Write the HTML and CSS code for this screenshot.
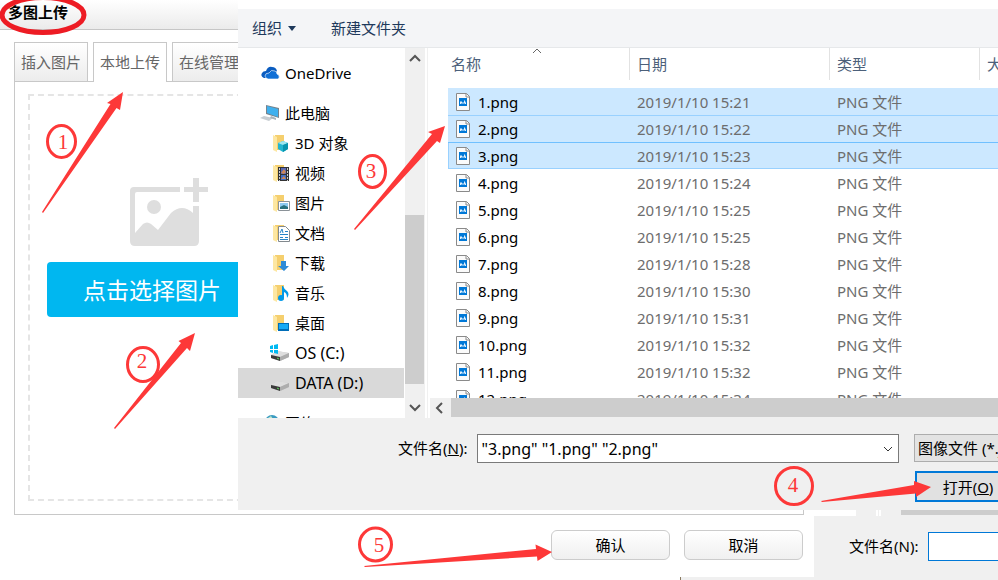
FILE: index.html
```
<!DOCTYPE html>
<html lang="zh-CN">
<head>
<meta charset="utf-8">
<title>多图上传</title>
<link rel="stylesheet" href="styles.css">
</head>
<body>
<svg class="defs" aria-hidden="true">
  <defs>
    <symbol id="folder" viewBox="0 0 18 18">
      <path d="M3 1h9v15H3z" fill="#f5cf6e"/>
      <path d="M1 1l4 2v15l-4-2z" fill="#fde7a2"/>
    </symbol>
    <symbol id="file" viewBox="0 0 16 20">
      <path d="M1.500 1.500h10l3 3v14h-13z" fill="#fbfbfb" stroke="#8a8a8a"/>
      <path d="M11 1.500v3.500h3.500" fill="none" stroke="#8a8a8a"/>
      <path d="M4 6h8v8H4z" fill="#0078d7"/>
      <path d="M5 10l1-1 1 1 1 1 1-1V8l1 1 1 2v1h-1l-1-1-1 1-1-1-1 1H5z" fill="#e4f2fd"/>
    </symbol>
    <symbol id="drive" viewBox="0 0 20 18">
      <path d="M1 9l6-4 12 2v4l-9 4-9-3z" fill="#c9c9c9"/>
      <path d="M1 9l6-4 12 2-9 4z" fill="#dedede"/>
      <path d="M1 9l9 2v4l-9-3z" fill="#3a3a3a"/>
      <path d="M10 11l9-4v4l-9 4z" fill="#adadad"/>
      <path d="M7 12l2 1" stroke="#5fe05f"/>
    </symbol>
  </defs>
</svg>

<main class="upload">
  <header class="upload-title"><h1>多图上传</h1></header>
  <nav class="tabs">
    <button type="button" class="tab">插入图片</button>
    <button type="button" class="tab active">本地上传</button>
    <button type="button" class="tab">在线管理</button>
  </nav>
  <section class="panel">
    <div class="dropzone">
      <div class="chooser">
        <svg class="photo" viewBox="0 0 80 68" width="80" height="68" aria-hidden="true">
          <g fill="#dedede">
            <path d="M5 9H51V14H8Q6 14 6 16V60H1V13Q1 9 5 9z"/>
            <path d="M64 0h6v9h9v5h-9v10h-6v-10h-9V9h9z"/>
            <circle cx="25" cy="29" r="7"/>
            <path d="M64 28h6v35q0 5-5 5H6q-5 0-5-5V56L6 55 14 46Q18 43 22 46L29 52 42 35Q53 25 64 35z"/>
          </g>
        </svg>
        <button type="button" class="choose">点击选择图片</button>
      </div>
    </div>
  </section>
  <footer class="upload-actions">
    <button type="button">确认</button>
    <button type="button">取消</button>
  </footer>
</main>

<section class="picker" aria-label="打开">
  <div class="toolbar">
    <button type="button">组织 <svg width="8" height="5" aria-hidden="true"><path d="M0 0h8L4 5z" fill="#1e395b"/></svg></button>
    <button type="button">新建文件夹</button>
  </div>
  <div class="browser">
    <ul class="tree">
      <li class="root"><svg width="20" height="18" aria-hidden="true"><path d="M4 14Q0 12 2 9q1-2 4-2 2-5 6-4 4 0 5 4l-9 7z" fill="#0a5cc0"/><path d="M8 15q-3-1-3-3 0-3 4-3 2-4 6-2 2 1 2 3 3 1 2 4l-1 1z" fill="#0f6fd6" stroke="#fff" stroke-width="0.600"/></svg>OneDrive</li>
      <li class="root"><svg width="20" height="18" aria-hidden="true"><path d="M6 1l13 3v10L6 10z" fill="#76838d"/><path d="M7 2l11 3v8L7 9z" fill="#3fb0ee"/><path d="M0 14l4-2 9 2-4 3z" fill="#c7cdd2"/><path d="M11 12l5 2v2l-6-2z" fill="#a9b4bb"/></svg>此电脑</li>
      <li><svg width="18" height="18" aria-hidden="true"><use href="#folder"/><path d="M6 9l5-2 5 2v6l-5 3-5-3z" fill="#22b5cf"/><path d="M6 9l5-2 5 2-5 2z" fill="#9fe6ef"/><path d="M11 11l5-2v6l-5 3z" fill="#0794ae"/></svg>3D 对象</li>
      <li><svg width="18" height="18" aria-hidden="true"><use href="#folder"/><path d="M6 3h11v14H6z" fill="#333"/><path d="M9 4h5v6H9z" fill="#5667ba"/><path d="M9 11h5v5H9z" fill="#416fc5"/><path d="M9 9l3-4 2 3-2 2zM9 15l3-3 2 3z" fill="#cf8757"/><path d="M7.500 4v13M15.500 4v13" stroke="#ccc" stroke-dasharray="2 1"/></svg>视频</li>
      <li><svg width="18" height="18" aria-hidden="true"><use href="#folder"/><path d="M6.500 7.500h11v9h-11z" fill="#fff" stroke="#8b9298"/><path d="M8 9h8v6H8z" fill="#8dcaf1"/><path d="M8 13l4-2 4 2v2H8z" fill="#28717e"/></svg>图片</li>
      <li><svg width="18" height="18" aria-hidden="true"><use href="#folder"/><path d="M6.500 2.500h7l4 4v11h-11z" fill="#fff" stroke="#82898e"/><path d="M8 9l2-4 1 4M13 7.500h3M8 10.500h8M8 13.500h3M13 13.500h3M8 15.500h8" fill="none" stroke="#2686c7"/></svg>文档</li>
      <li><svg width="18" height="18" aria-hidden="true"><use href="#folder"/><path d="M9 7h5v5h3l-5 5-6-5h3z" fill="#2e8bd7"/></svg>下载</li>
      <li><svg width="18" height="18" aria-hidden="true"><use href="#folder"/><path d="M10 14V2h1q1 3 4 5 3 3 0 7 0-5-3-6v6" fill="#0099e8"/><ellipse cx="9" cy="14" rx="3" ry="3" fill="#0099e8"/></svg>音乐</li>
      <li><svg width="18" height="18" aria-hidden="true"><use href="#folder"/><path d="M6 9h11v8H6z" fill="#006db7"/><path d="M7 10h9v5H7z" fill="#17a9f5"/></svg>桌面</li>
      <li class="disk"><svg width="20" height="18" aria-hidden="true"><use href="#drive" y="2"/><path d="M0 2l3-1v4H0zM4 1l4-1v5H4zM0 6h3v3l-3-1zM4 6h4v4l-4-1z" fill="#00b9f2"/></svg>OS (C:)</li>
      <li class="disk selected"><svg width="20" height="18" aria-hidden="true"><use href="#drive" y="2"/></svg>DATA (D:)</li>
      <li class="root network"><svg width="20" height="18" aria-hidden="true"><circle cx="12" cy="8" r="7" fill="#3b9bc1"/><path d="M8 4l3-2 2 3-3 2z" fill="#bce5ca"/></svg>网络</li>
    </ul>
    <div class="vbar">
      <svg width="20" height="20" aria-hidden="true"><path d="M5 13l5-5 5 5" fill="none" stroke="#555" stroke-width="2"/></svg>
      <span class="thumb"></span>
      <svg width="20" height="20" aria-hidden="true"><path d="M5 7l5 5 5-5" fill="none" stroke="#555" stroke-width="2"/></svg>
    </div>
    <div class="files">
      <div class="list">
        <table>
          <colgroup><col class="c-name"><col class="c-date"><col class="c-type"><col class="c-size"></colgroup>
          <thead><tr><th><span>名称<svg class="sort" width="10" height="6" aria-hidden="true"><path d="M1 5l4-4 4 4" fill="none" stroke="#666"/></svg></span></th><th><span>日期</span></th><th><span>类型</span></th><th><span>大小</span></th></tr></thead>
          <tbody>
            <tr class="sel"><td><svg width="16" height="20" aria-hidden="true"><use href="#file"/></svg>1.png</td><td>2019/1/10 15:21</td><td>PNG 文件</td><td></td></tr>
            <tr class="sel"><td><svg width="16" height="20" aria-hidden="true"><use href="#file"/></svg>2.png</td><td>2019/1/10 15:22</td><td>PNG 文件</td><td></td></tr>
            <tr class="sel focus"><td><svg width="16" height="20" aria-hidden="true"><use href="#file"/></svg>3.png</td><td>2019/1/10 15:23</td><td>PNG 文件</td><td></td></tr>
            <tr><td><svg width="16" height="20" aria-hidden="true"><use href="#file"/></svg>4.png</td><td>2019/1/10 15:24</td><td>PNG 文件</td><td></td></tr>
            <tr><td><svg width="16" height="20" aria-hidden="true"><use href="#file"/></svg>5.png</td><td>2019/1/10 15:25</td><td>PNG 文件</td><td></td></tr>
            <tr><td><svg width="16" height="20" aria-hidden="true"><use href="#file"/></svg>6.png</td><td>2019/1/10 15:25</td><td>PNG 文件</td><td></td></tr>
            <tr><td><svg width="16" height="20" aria-hidden="true"><use href="#file"/></svg>7.png</td><td>2019/1/10 15:28</td><td>PNG 文件</td><td></td></tr>
            <tr><td><svg width="16" height="20" aria-hidden="true"><use href="#file"/></svg>8.png</td><td>2019/1/10 15:30</td><td>PNG 文件</td><td></td></tr>
            <tr><td><svg width="16" height="20" aria-hidden="true"><use href="#file"/></svg>9.png</td><td>2019/1/10 15:31</td><td>PNG 文件</td><td></td></tr>
            <tr><td><svg width="16" height="20" aria-hidden="true"><use href="#file"/></svg>10.png</td><td>2019/1/10 15:32</td><td>PNG 文件</td><td></td></tr>
            <tr><td><svg width="16" height="20" aria-hidden="true"><use href="#file"/></svg>11.png</td><td>2019/1/10 15:32</td><td>PNG 文件</td><td></td></tr>
            <tr><td><svg width="16" height="20" aria-hidden="true"><use href="#file"/></svg>12.png</td><td>2019/1/10 15:34</td><td>PNG 文件</td><td></td></tr>
          </tbody>
        </table>
      </div>
      <div class="hbar">
        <svg width="20" height="19" aria-hidden="true"><path d="M12 5l-5 5 5 5" fill="none" stroke="#555" stroke-width="2"/></svg>
        <span class="thumb"></span>
      </div>
    </div>
  </div>
  <div class="picker-foot">
    <label for="fname">文件名(<u>N</u>):</label>
    <div class="combo">
      <input id="fname" type="text" value='"3.png" "1.png" "2.png"'>
      <svg width="10" height="6" aria-hidden="true"><path d="M1 1l4 4 4-4" fill="none" stroke="#333"/></svg>
    </div>
    <div class="side">
      <select aria-label="文件类型"><option>图像文件 (*.jpg;*.png)</option></select>
      <button type="button">打开(<u>O</u>)</button>
    </div>
  </div>
</section>

<section class="behind" aria-label="文件名">
  <div class="edge"><i class="gap"></i><i class="cell"></i><i class="line"></i><i class="dot"></i><i class="line"></i><i class="cell"></i><i class="bar"></i></div>
  <div class="behind-row">
    <label for="fname2">文件名(N):</label>
    <input id="fname2" type="text">
  </div>
</section>
<div class="ledge"></div>

<svg class="marks" viewBox="0 0 998 580" width="998" height="580" aria-hidden="true">
  <ellipse cx="43" cy="15" rx="41" ry="17.500" fill="none" stroke="#ed1c24" stroke-width="5"/>
  <g fill="none" stroke="#fd3838" stroke-width="3">
    <ellipse cx="61.500" cy="141.500" rx="14" ry="16"/>
    <ellipse cx="143" cy="364.500" rx="15.500" ry="17"/>
    <ellipse cx="372.500" cy="171.500" rx="13" ry="16"/>
    <circle cx="794" cy="486" r="18.500"/>
    <ellipse cx="375.500" cy="544.500" rx="16" ry="16.500"/>
  </g>
  <g fill="#fd3838">
    <path d="M42 212L110.500 104 107 103 123 92 120 110 116.500 108 43 213z"/>
    <path d="M114 428L181 343 178.500 341 195 333 190 351 187 348 115 429z"/>
    <path d="M354 229L432 134 428 132 445 126 440 143 437 141 355 230z"/>
    <path d="M821 501L914 485 914 481 931 487 916 497 916 493.500 822 502z"/>
    <path d="M364 566L536 549 535.500 544.500 552 552 537.500 561 537 556.500 365 567z"/>
  </g>
  <g class="digits">
    <text x="63" y="149">1</text>
    <text x="142" y="368">2</text>
    <text x="371" y="178">3</text>
    <text x="793" y="492">4</text>
    <text x="379" y="552">5</text>
  </g>
</svg>
</body>
</html>
```
FILE: styles.css
```
* { box-sizing: border-box; }

body {
  position: relative;
  min-height: 100vh;
  margin: 0;
  overflow: hidden;
  background: #fff;
  color: #000;
  font: 15px/20px "Noto Sans", "Noto Sans CJK SC", sans-serif;
}

button, input, select { font: inherit; color: inherit; margin: 0; }
svg { flex: none; }
.defs { position: absolute; width: 0; height: 0; }

/* upload dialog */
.upload-title {
  height: 30px;
  padding: 2px 8px;
  border-bottom: 1px solid #c6c6c6;
  background: linear-gradient(#fff, #ebebeb);
}
.upload-title h1 { margin: 0; font-size: 15px; line-height: 20px; }

.tabs { display: flex; gap: 5px; margin: 12px 194px 0 14px; }
.tab {
  height: 39px;
  padding: 0 6px;
  border: 1px solid #c8c8c8;
  border-bottom: 0;
  background: linear-gradient(#fff, #ececec);
  color: #666;
}
.tab.active { z-index: 1; height: 40px; margin-bottom: -1px; padding-bottom: 2px; background: #fff; }

.panel {
  margin: 0 194px 0 14px;
  padding: 12px 13px 13px;
  border: 1px solid #c8c8c8;
}
.dropzone { height: 407px; padding: 82px 17px; border: 2px dashed #e5e5e5; }
.chooser { display: flex; flex-direction: column; align-items: center; gap: 16px; width: 210px; }
.photo { margin-left: 34px; }
.choose {
  width: 100%;
  height: 55px;
  padding: 0;
  border: 0;
  border-radius: 4px;
  background: #00b7f0;
  color: #fff;
  font-size: 23px;
}

.upload-actions { display: flex; justify-content: flex-end; gap: 14px; margin: 15px 195px 0 0; }
.upload-actions button {
  width: 119px;
  height: 30px;
  padding: 0;
  border: 1px solid #ccc;
  border-radius: 6px;
  background: linear-gradient(#fff, #f0f0f0);
}

/* file picker window */
.picker {
  position: absolute;
  top: 0;
  right: 0;
  left: 238px;
  z-index: 2;
  overflow: hidden;
  padding-top: 9px;
  background: #fff;
}
.toolbar {
  display: flex;
  align-items: center;
  gap: 35px;
  height: 39px;
  padding: 0 14px;
  border-bottom: 1px solid #e6e8ea;
  background: #f4f5f7;
}
.toolbar button { display: flex; align-items: center; gap: 6px; padding: 0; border: 0; background: none; color: #1e395b; }

.browser { display: flex; height: 370px; }
.tree { width: 167px; margin: 0; padding: 10px 0 0; overflow: hidden; list-style: none; }
.tree li { display: flex; align-items: center; gap: 5px; height: 30px; padding-left: 34px; }
.tree .root { margin-bottom: 10px; padding-left: 22px; }
.tree .root + .root { margin-bottom: 0; }
.tree .disk { padding-left: 32px; font-size: 16px; }
.tree .selected { margin-right: 1px; background: #d9d9d9; }
.tree .network { margin-top: 10px; }

.vbar { display: flex; flex-direction: column; justify-content: space-between; width: 20px; background: #f0f0f0; }
.vbar .thumb { height: 169px; margin: 132px 1px 0 0; background: #cdcdcd; }

.files { display: flex; flex: 1; flex-direction: column; min-width: 0; margin-left: 2px; border-left: 1px solid #f0f0f0; }
.list { flex: 1; overflow: hidden; padding-left: 20px; }
table { width: 100%; border-collapse: collapse; table-layout: fixed; }
.c-name { width: 181px; }
.c-date { width: 200px; }
.c-type { width: 150px; }
th { height: 40px; padding: 0; color: #4c607a; font-weight: 400; text-align: left; vertical-align: top; }
th span { display: block; height: 32px; padding-left: 7px; overflow: hidden; border-left: 1px solid #e2e2e2; line-height: 32px; white-space: nowrap; }
th:first-child span { position: relative; padding-left: 3px; border-left: 0; }
.sort { position: absolute; top: 0; left: 84px; }
td { height: 27px; padding: 0 0 0 8px; color: #6d6d6d; white-space: nowrap; }
td:first-child { padding-left: 7px; color: #000; }
td svg { margin-right: 7px; vertical-align: -4px; }
.sel { background: #cce8ff; }
.sel + .sel { box-shadow: inset 0 1px #99d1ff; }
.sel + .focus { box-shadow: inset 0 1px #70c0ff, inset 1px -1px #99d1ff; }

.hbar { display: flex; height: 20px; margin-left: 2px; padding-bottom: 1px; background: #f0f0f0; }
.hbar .thumb { flex: 1; margin-left: 1px; background: #cdcdcd; }

.picker-foot {
  display: flex;
  height: 92px;
  padding: 16px 0 0 160px;
  background: #f0f0f0;
}
.picker-foot label { margin-right: 10px; line-height: 29px; }
.combo { display: flex; flex: 1; align-items: center; height: 29px; padding-right: 5px; border: 1px solid #7a7a7a; background: #fff; }
.combo input { flex: 1; min-width: 0; padding: 0 3px; border: 0; outline: 0; background: none; font-size: 16px; }
.side { display: flex; flex-direction: column; gap: 9px; width: 84px; margin-left: 15px; }
.side select { width: 200px; height: 28px; padding: 0 3px; appearance: none; border: 1px solid #adadad; border-radius: 0; background: #e3e3e3; }
.side button { width: 106px; height: 31px; margin-left: 1px; padding: 0; border: 2px solid #0078d7; background: #e1e1e1; }

/* window partly hidden under the picker */
.behind { position: absolute; top: 510px; right: 0; bottom: 0; left: 804px; }
.edge { display: flex; height: 6px; background: #f0f0f0; }
.edge .gap { width: 52px; background: #fff; }
.edge .cell { width: 20px; }
.edge .line { width: 2px; background: #fff; }
.edge .dot { width: 1px; }
.edge .bar { flex: 1; height: 5px; background: #cdcdcd; }
.behind-row { display: flex; height: 64px; margin-left: 10px; padding: 16px 0 0 35px; background: #f0f0f0; }
.behind-row label { margin-right: 10px; line-height: 29px; }
.behind-row input { flex: 1; min-width: 0; height: 29px; border: 1px solid #0078d7; border-right: 0; background: #fff; }
.ledge { position: absolute; right: 0; bottom: 0; left: 680px; height: 3px; border-left: 1px solid #8a7a60; background: #f0f0f0; }

/* hand-drawn step marks */
.marks { position: absolute; top: 0; left: 0; z-index: 3; pointer-events: none; }
.digits { fill: #fd3838; font: 21px "Liberation Serif", serif; text-anchor: middle; }
```
